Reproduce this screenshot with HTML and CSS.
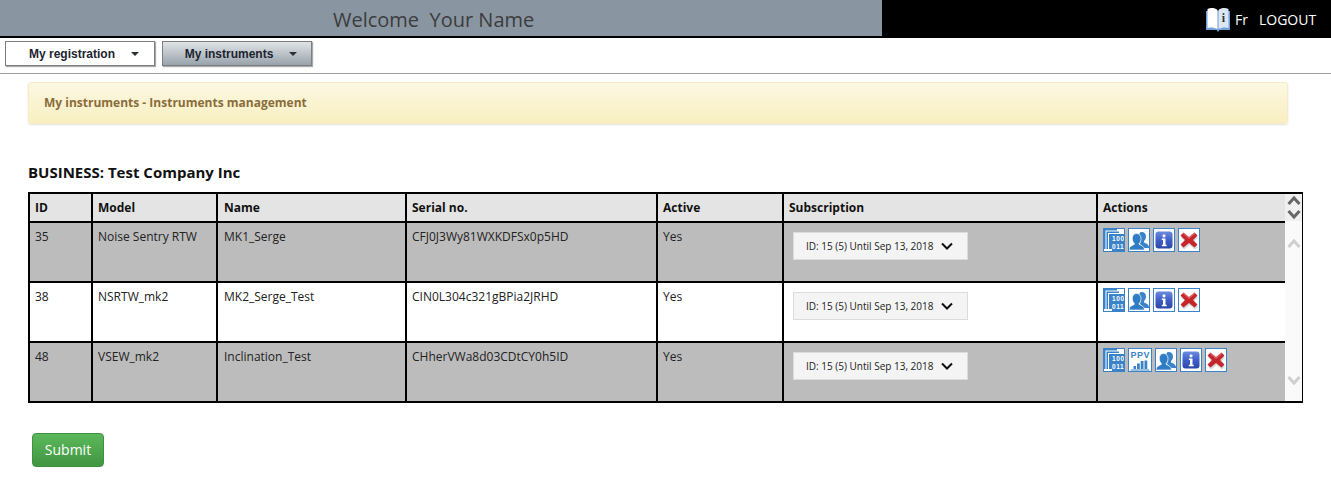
FILE: index.html
```html
<!DOCTYPE html>
<html lang="en">
<head>
<meta charset="utf-8">
<title>My instruments</title>
<link rel="stylesheet" href="styles.css">
</head>
<body>
<svg class="defs" width="0" height="0" aria-hidden="true">
  <defs>
    <linearGradient id="g-info" x1="0" y1="0" x2="0" y2="1">
      <stop offset="0" stop-color="#6d8be0"/>
      <stop offset=".5" stop-color="#3f60c8"/>
      <stop offset="1" stop-color="#2c46a8"/>
    </linearGradient>
    <symbol id="i-binary" viewBox="0 0 20 22">
      <rect x="0" y="0" width="20" height="22" fill="#fff"/>
      <path d="M0 0h13v1.500H1.500V20H0z" fill="#3a83c9"/>
      <path d="M2.500 2.500H15V4H4v16H2.500z" fill="#3a83c9"/>
      <path d="M5 5h15v17H8v-2H5z" fill="#3a83c9"/>
      <text x="8" y="12" class="bin">100</text>
      <text x="8" y="20" class="bin">011</text>
    </symbol>
    <symbol id="i-ppv" viewBox="0 0 21 22">
      <rect width="21" height="22" fill="#fff"/>
      <text x="1" y="9" class="ppv">PPV</text>
      <path d="M4 17h2.500v3H4zM7.500 14.500h2.800V20H7.500zM11.200 12h2.800v8h-2.800zM15 11.500h2.800V20H15z" fill="#3a83c9"/>
      <path d="M1 21h19" stroke="#3a83c9"/>
    </symbol>
    <symbol id="i-user" viewBox="0 0 20 22">
      <rect width="20" height="22" fill="#fff"/>
      <path d="M12.500 3c3 0 4.500 2 4.500 4.500 0 2-1 3.500-2 4.500v1.500c2 1 4.500 1.500 5 4.500v1h-6.500c-.5-2.500-2-3.500-3-4 1-1 1-2 1-3-1-1-1.500-2.500-1.500-4C10 5 10.500 3 12.500 3z" fill="#3a83c9"/>
      <path d="M7.500 4.500c3 0 4.500 2.400 4.500 5.200 0 2-.8 3.700-1.800 4.700v1c2 1 4.800 1.800 5.300 5v.6H0V20.400c.5-3.200 3.300-4 5.300-5v-1C4.300 13.400 3.300 11.700 3.300 9.700c0-2.800 1.200-5.200 4.200-5.200z" fill="#2f7cc4" stroke="#fff" stroke-width=".7"/>
    </symbol>
    <symbol id="i-info" viewBox="0 0 20 22">
      <rect width="20" height="22" fill="#fff"/>
      <rect x="1.500" y="2.500" width="17" height="17" rx="3" fill="url(#g-info)"/>
      <circle cx="10" cy="6.800" r="1.600" fill="#fff"/>
      <path d="M7.800 9.500h3.700v6.300h1.200v1.400H7.800v-1.400H9v-4.900H7.800z" fill="#fff"/>
    </symbol>
    <symbol id="i-del" viewBox="0 0 20 22">
      <rect width="20" height="22" fill="#fff"/>
      <path d="M5 5.500 10.500 10l5.500-4.500 3 3L14.500 13l4.500 4.500-3 3L10.500 16 5 20.500l-3-3L6.500 13 2 8.500z" fill="#bdbdbd" opacity=".6"/>
      <path d="M4.500 3.500 10 8l5.500-4.500 3 3L14 11l4.500 4.500-3 3L10 14l-5.500 4.500-3-3L6 11 1.500 6.500z" fill="#c4262b"/>
      <path d="M4.500 3.500 10 8l5.500-4.500 1 1L10 10 3.500 4.500z" fill="#e88" opacity=".55"/>
    </symbol>
    <symbol id="i-book" viewBox="0 0 26 26">
      <path d="M1 4v19h10.500l1.500 2 1.500-2H25V4z" fill="#6f9fd8"/>
      <path d="M2.500 2c3-1.500 7-1.500 10 1v19c-3-1.500-7-2-10-1z" fill="#fff"/>
      <path d="M13.500 3c3-2.500 7-2.500 10-1v19c-3-1-7-.5-10 1z" fill="#dbe6f2"/>
      <text x="18.500" y="15" class="booki">i</text>
    </symbol>
  </defs>
</svg>

<header class="topbar">
  <div class="welcome">Welcome&nbsp; Your Name</div>
  <div class="account">
    <svg class="book" width="26" height="26"><use href="#i-book"/></svg>
    <a class="lang">Fr</a>
    <a class="logout">LOGOUT</a>
  </div>
</header>

<nav class="menu">
  <button class="menu-btn">My registration<span class="caret"></span></button>
  <button class="menu-btn active">My instruments<span class="caret"></span></button>
</nav>

<main class="content">
  <div class="notice">My instruments - Instruments management</div>
  <h2 class="business">BUSINESS: Test Company Inc</h2>

  <div class="table-wrap">
    <table class="grid">
      <colgroup>
        <col class="c-id"><col class="c-model"><col class="c-name"><col class="c-serial"><col class="c-active"><col class="c-sub"><col class="c-act">
      </colgroup>
      <thead>
        <tr><th>ID</th><th>Model</th><th>Name</th><th>Serial no.</th><th>Active</th><th>Subscription</th><th>Actions</th></tr>
      </thead>
      <tbody>
        <tr class="odd">
          <td>35</td><td>Noise Sentry RTW</td><td>MK1_Serge</td><td>CFJ0J3Wy81WXKDFSx0p5HD</td><td>Yes</td>
          <td class="sub-cell"><div class="select"><span>ID: 15 (5) Until Sep 13, 2018</span><svg class="chev" width="12" height="8" viewBox="0 0 12 8"><path d="M1 1.500 6 6.500l5-5" fill="none" stroke="#111" stroke-width="2"/></svg></div></td>
          <td class="act-cell"><div class="icons">
            <a class="ico"><svg><use href="#i-binary"/></svg></a>
            <a class="ico"><svg><use href="#i-user"/></svg></a>
            <a class="ico"><svg><use href="#i-info"/></svg></a>
            <a class="ico"><svg><use href="#i-del"/></svg></a>
          </div></td>
        </tr>
        <tr>
          <td>38</td><td>NSRTW_mk2</td><td>MK2_Serge_Test</td><td>CIN0L304c321gBPia2JRHD</td><td>Yes</td>
          <td class="sub-cell"><div class="select"><span>ID: 15 (5) Until Sep 13, 2018</span><svg class="chev" width="12" height="8" viewBox="0 0 12 8"><path d="M1 1.500 6 6.500l5-5" fill="none" stroke="#111" stroke-width="2"/></svg></div></td>
          <td class="act-cell"><div class="icons">
            <a class="ico"><svg><use href="#i-binary"/></svg></a>
            <a class="ico"><svg><use href="#i-user"/></svg></a>
            <a class="ico"><svg><use href="#i-info"/></svg></a>
            <a class="ico"><svg><use href="#i-del"/></svg></a>
          </div></td>
        </tr>
        <tr class="odd">
          <td>48</td><td>VSEW_mk2</td><td>Inclination_Test</td><td>CHherVWa8d03CDtCY0h5ID</td><td>Yes</td>
          <td class="sub-cell"><div class="select"><span>ID: 15 (5) Until Sep 13, 2018</span><svg class="chev" width="12" height="8" viewBox="0 0 12 8"><path d="M1 1.500 6 6.500l5-5" fill="none" stroke="#111" stroke-width="2"/></svg></div></td>
          <td class="act-cell"><div class="icons">
            <a class="ico"><svg><use href="#i-binary"/></svg></a>
            <a class="ico wide"><svg viewBox="0 0 21 22"><use href="#i-ppv"/></svg></a>
            <a class="ico"><svg><use href="#i-user"/></svg></a>
            <a class="ico"><svg><use href="#i-info"/></svg></a>
            <a class="ico"><svg><use href="#i-del"/></svg></a>
          </div></td>
        </tr>
      </tbody>
    </table>
    <div class="scrollbar">
      <div class="sb-head">
        <svg width="14" height="12" viewBox="0 0 14 12"><path d="M1.500 10 7 4l5.500 6" fill="none" stroke="#666" stroke-width="3"/></svg>
        <svg width="14" height="12" viewBox="0 0 14 12"><path d="M1.500 2 7 8l5.500-6" fill="none" stroke="#666" stroke-width="3"/></svg>
      </div>
      <div class="sb-track">
        <svg width="14" height="12" viewBox="0 0 14 12"><path d="M1.500 10 7 4l5.500 6" fill="none" stroke="#cfcfcf" stroke-width="3"/></svg>
        <svg width="14" height="12" viewBox="0 0 14 12"><path d="M1.500 2 7 8l5.500-6" fill="none" stroke="#cfcfcf" stroke-width="3"/></svg>
      </div>
    </div>
  </div>

  <button class="submit">Submit</button>
</main>
</body>
</html>
```

FILE: styles.css
```css
* { box-sizing: border-box; }
html, body { margin: 0; padding: 0; }
body {
  width: 1331px;
  height: 483px;
  overflow: hidden;
  background: #fff;
  font-family: "Open Sans", sans-serif;
  font-size: 12px;
  color: #222;
}
.defs { position: absolute; }
.bin { font: 700 6.500px "Liberation Sans", sans-serif; fill: #fff; letter-spacing: .6px; }
.ppv { font: 700 9px "Liberation Sans", sans-serif; fill: #3a83c9; letter-spacing: .5px; }
.booki { font: 700 12px "Liberation Serif", serif; fill: #333; text-anchor: middle; }

.topbar {
  display: flex;
  height: 38px;
  border-bottom: 2px solid #000;
}
.welcome {
  width: 882px;
  padding-left: 333px;
  background: #8996a1;
  color: #3c3c3c;
  font-size: 20px;
  line-height: 39px;
}
.account {
  flex: 1;
  display: flex;
  align-items: center;
  background: #000;
  color: #fff;
  font-size: 14px;
  padding-left: 323px;
  padding-top: 3px;
}
.book { margin-top: 1px; }
.lang { margin-left: 4px; }
.logout { margin-left: 11px; }

.menu {
  display: flex;
  gap: 7px;
  height: 36px;
  padding: 3px 0 0 5px;
  border-bottom: 1px solid #999fa3;
}
.menu-btn {
  display: flex;
  align-items: center;
  justify-content: center;
  width: 150px;
  height: 25px;
  padding: 1px 0 0 8px;
  background: #fff;
  border: 1px solid #7b7f82;
  box-shadow: 1px 1px 1px #aaa;
  font: 700 12px "Liberation Sans", Arial, sans-serif;
  color: #1c2430;
}
.menu-btn.active {
  background: linear-gradient(#dfe3e6, #99a3ac);
}
.caret {
  width: 0;
  height: 0;
  margin-left: 16px;
  border-left: 4px solid transparent;
  border-right: 4px solid transparent;
  border-top: 4px solid #2a2f36;
}

.content { padding: 8px 28px 0; }
.notice {
  width: 1260px;
  height: 42px;
  padding-left: 15px;
  line-height: 39px;
  background: linear-gradient(#fcf8e3, #f8efc0);
  border: 1px solid #f7ebc6;
  border-radius: 3px;
  box-shadow: 0 1px 2px rgba(0,0,0,.12);
  color: #8a6d3b;
  font-weight: 700;
  font-size: 12px;
}
.business {
  margin: 39px 0 0;
  height: 29px;
  font-size: 15px;
  line-height: 19px;
  font-weight: 700;
  color: #111;
}

.table-wrap {
  display: flex;
  width: 1275px;
  height: 211px;
}
.grid {
  width: 1256px;
  height: 211px;
  table-layout: fixed;
  border-collapse: collapse;
  border: 2px solid #000;
  border-right: 0;
}
.c-id { width: 63px; }
.c-model { width: 125px; }
.c-name { width: 189px; }
.c-serial { width: 251px; }
.c-active { width: 126px; }
.c-sub { width: 314px; }
.c-act { width: 188px; }
.grid th, .grid td {
  border: 2px solid #000;
  text-align: left;
  vertical-align: top;
  padding: 6px 5px 0 5px;
  line-height: 16px;
}
.grid tr > :nth-child(3) { padding-left: 6px; }
.grid tr > :last-child { border-right: 0; }
.grid thead tr { height: 29px; }
.grid th {
  background: #e4e4e4;
  font-weight: 700;
  color: #111;
}
.grid tbody tr { height: 60px; }
.grid tr.odd td { background: #bcbcbc; }
.grid td.sub-cell { padding: 9px 0 0 9px; }
.grid td.act-cell { padding: 5px 0 0 5px; }
.select {
  display: flex;
  align-items: center;
  width: 175px;
  height: 28px;
  padding-left: 12px;
  background: #f4f4f4;
  border: 1px solid #dcdcdc;
  font-size: 10px;
  color: #222;
}
.chev { margin-left: 8px; }
.icons { display: flex; gap: 3px; }
.ico {
  display: block;
  width: 22px;
  height: 24px;
  background: #fff;
  border: 1px solid #3a83c9;
}
.ico.wide { width: 24px; }
.ico svg { display: block; width: 100%; height: 100%; }

.scrollbar {
  width: 19px;
  display: flex;
  flex-direction: column;
  border-top: 2px solid #000;
  border-bottom: 2px solid #000;
  border-right: 1px solid #000;
}
.sb-head {
  height: 27px;
  display: flex;
  flex-direction: column;
  align-items: flex-start;
  gap: 3px;
  padding-left: 2px;
  background: #f0f0f0;
}
.sb-head svg { display: block; }
.sb-track {
  flex: 1;
  display: flex;
  flex-direction: column;
  justify-content: space-between;
  align-items: flex-start;
  padding: 16px 0 14px 2px;
  background: #fafafa;
}
.sb-track svg { display: block; }

.submit {
  display: block;
  width: 72px;
  height: 34px;
  margin: 30px 0 0 4px;
  padding: 0 0 2px;
  background: linear-gradient(#5cb85c, #419641);
  border: 1px solid #3e8f3e;
  border-radius: 4px;
  color: #fff;
  font: 14px "Open Sans", sans-serif;
}
```
